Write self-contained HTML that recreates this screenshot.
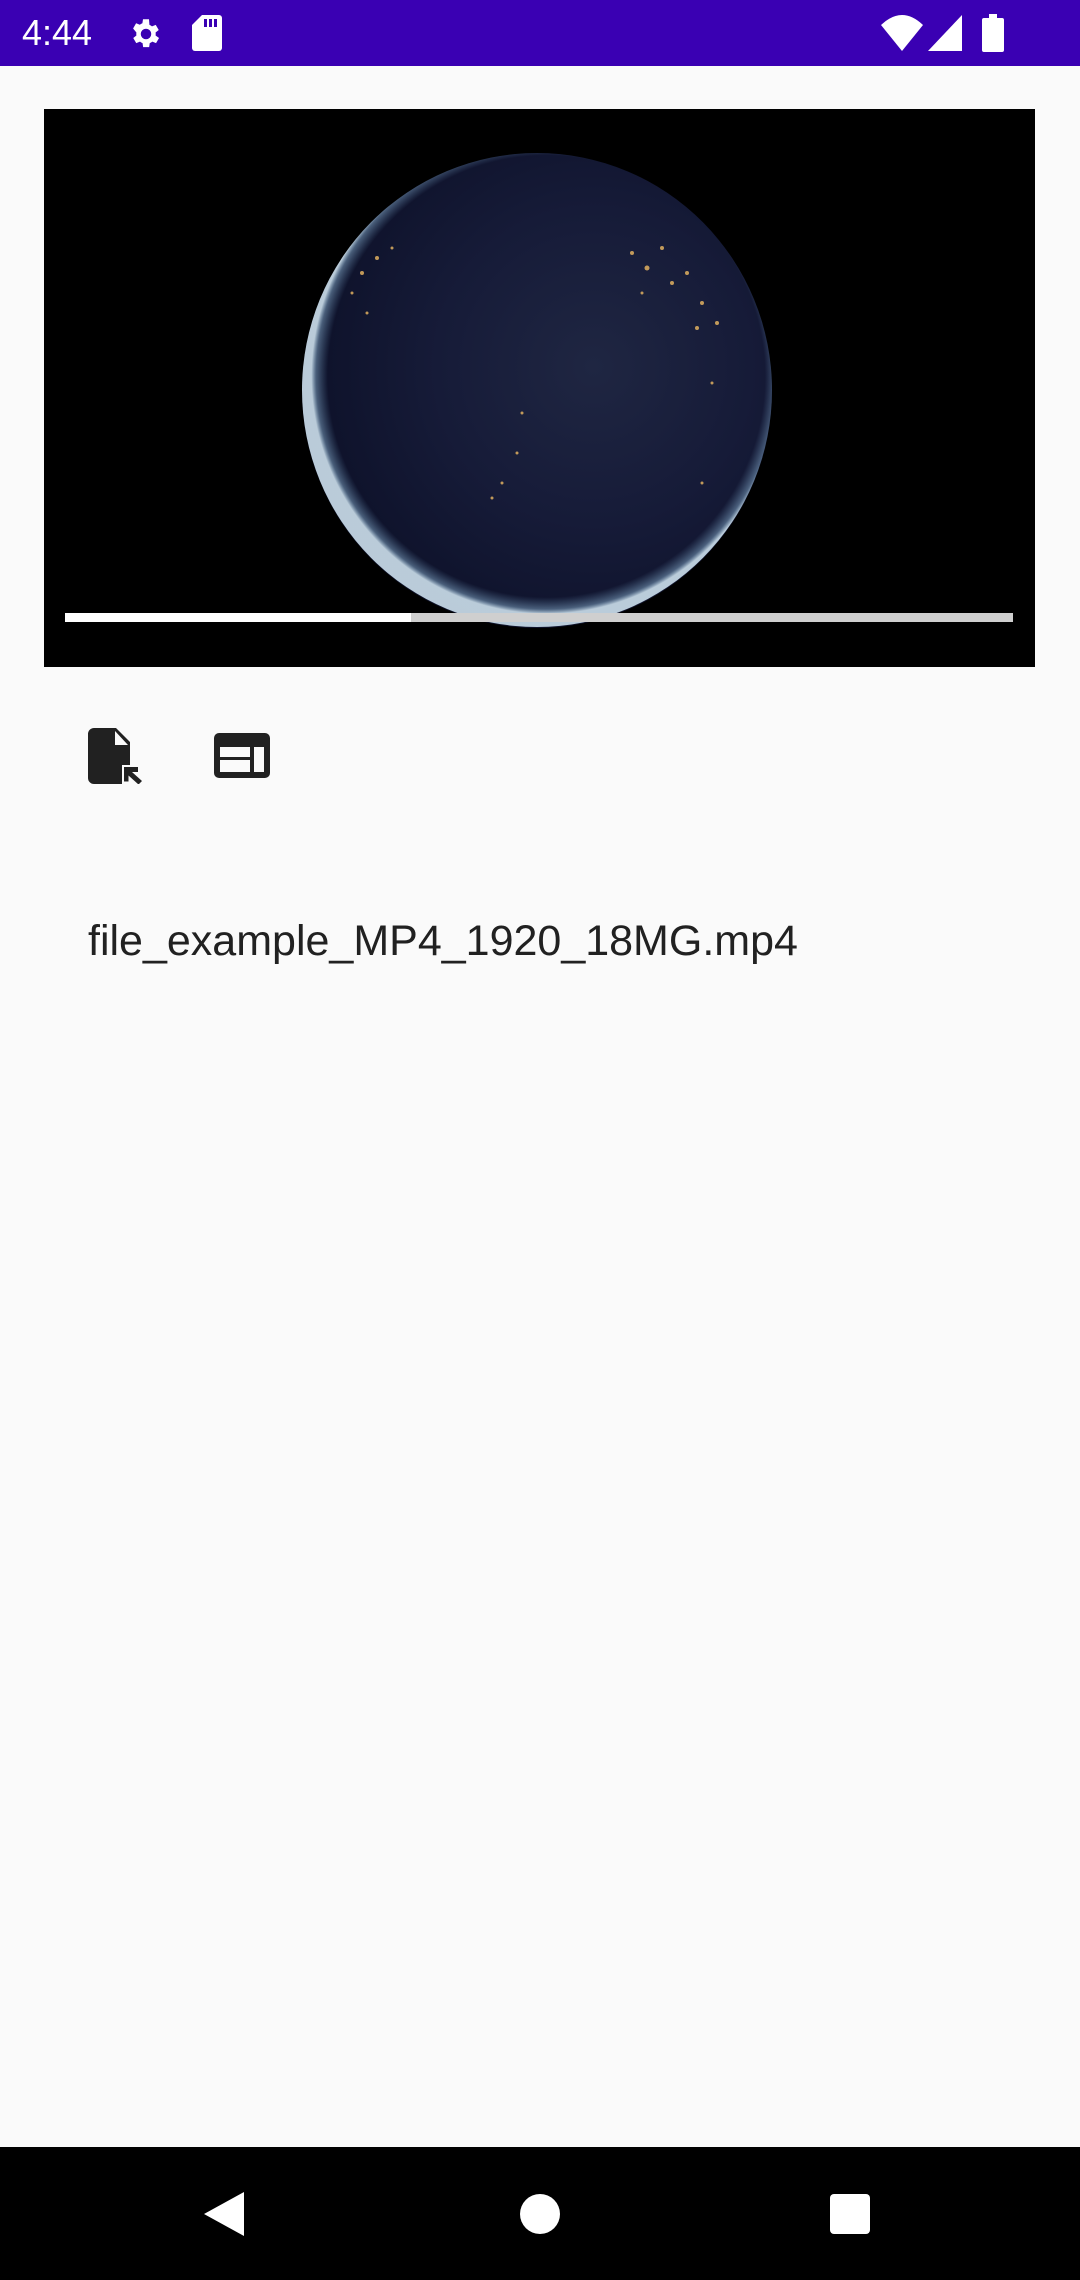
<!DOCTYPE html>
<html><head><meta charset="utf-8">
<style>
html,body{margin:0;padding:0;}
body{width:1080px;height:2280px;background:#fafafa;position:relative;overflow:hidden;font-family:"Liberation Sans",sans-serif;}
.status{position:absolute;left:0;top:0;width:1080px;height:66px;background:#3a00b3;}
.time{position:absolute;left:22px;top:12px;color:#fff;font-size:36px;}
.video{position:absolute;left:44px;top:109px;width:991px;height:558px;background:#000;overflow:hidden;}
.globe{position:absolute;left:258px;top:44px;width:470px;height:475px;border-radius:50%;
background:radial-gradient(circle at 62% 45%,#1f2642 0%,#161b38 40%,#0d1129 75%,#0c1226 100%);}
.prog{position:absolute;left:21px;top:504px;width:948px;height:9px;background:#cfcfcf;}
.prog div{width:346px;height:9px;background:#fff;}
.fname{position:absolute;left:88px;top:917px;font-size:43px;color:#212121;}
.nav{position:absolute;left:0;top:2147px;width:1080px;height:133px;background:#000;}
</style></head><body>
<div class="status">
<div class="time">4:44</div>
<svg style="position:absolute;left:128px;top:16px" width="36" height="36" viewBox="0 0 24 24"><path fill="#fff" d="M19.4 13c.04-.3.06-.65.06-1s-.02-.7-.07-1l2.1-1.65-2-3.46-2.5 1a7.3 7.3 0 0 0-1.7-1L15 2.2h-4l-.4 2.65c-.6.25-1.2.6-1.7 1l-2.5-1-2 3.46L6.6 11c-.04.3-.07.66-.07 1s.03.7.07 1l-2.1 1.65 2 3.46 2.5-1c.52.4 1.08.74 1.7 1l.4 2.65h4l.4-2.65c.6-.25 1.17-.6 1.7-1l2.5 1 2-3.46zM13 15.5a3.5 3.5 0 1 1 0-7 3.5 3.5 0 0 1 0 7z" transform="translate(-1 0)"/></svg>
<svg style="position:absolute;left:192px;top:15px" width="30" height="36" viewBox="0 0 30 36"><path fill="#fff" d="M10 0h17a3 3 0 0 1 3 3v30a3 3 0 0 1-3 3H3a3 3 0 0 1-3-3V10z"/><rect x="12" y="4" width="3" height="8" fill="#3a00b3"/><rect x="17" y="4" width="3" height="8" fill="#3a00b3"/><rect x="22" y="4" width="3" height="8" fill="#3a00b3"/></svg>
<svg style="position:absolute;left:881px;top:15px" width="42" height="36" viewBox="0 0 42 36"><path fill="#fff" d="M0 10 Q21-10 42 10 L21 36z"/></svg>
<svg style="position:absolute;left:928px;top:15px" width="34" height="36" viewBox="0 0 34 36"><path fill="#fff" d="M34 0v36H0z"/></svg>
<svg style="position:absolute;left:982px;top:14px" width="22" height="38" viewBox="0 0 22 38"><path fill="#fff" d="M7 0h8v4h5a2 2 0 0 1 2 2v30a2 2 0 0 1-2 2H2a2 2 0 0 1-2-2V6a2 2 0 0 1 2-2h5z"/></svg>
</div>
<div class="video">
<div class="globe"></div>
<svg style="position:absolute;left:258px;top:44px" width="470" height="475">
<defs><radialGradient id="rim" cx="52%" cy="47%" r="50%"><stop offset="93%" stop-color="#6f9cc0" stop-opacity="0"/><stop offset="98%" stop-color="#8fb8d8" stop-opacity=".45"/><stop offset="100%" stop-color="#d8ecf8" stop-opacity=".85"/></radialGradient>
<clipPath id="c"><ellipse cx="235" cy="237" rx="235" ry="237"/></clipPath></defs>
<rect width="470" height="475" fill="url(#rim)" clip-path="url(#c)"/>
<g fill="#e0b060" opacity=".85">
<circle cx="60" cy="120" r="2"/><circle cx="75" cy="105" r="2"/><circle cx="50" cy="140" r="1.5"/><circle cx="90" cy="95" r="1.5"/><circle cx="65" cy="160" r="1.5"/>
<circle cx="330" cy="100" r="2"/><circle cx="345" cy="115" r="2.5"/><circle cx="360" cy="95" r="2"/><circle cx="370" cy="130" r="2"/><circle cx="385" cy="120" r="2"/><circle cx="400" cy="150" r="2"/><circle cx="340" cy="140" r="1.5"/><circle cx="415" cy="170" r="2"/><circle cx="395" cy="175" r="2"/>
<circle cx="220" cy="260" r="1.5"/><circle cx="215" cy="300" r="1.5"/><circle cx="200" cy="330" r="1.5"/><circle cx="190" cy="345" r="1.5"/>
<circle cx="410" cy="230" r="1.5"/><circle cx="400" cy="330" r="1.5"/>
</g></svg>
<div class="prog"><div></div></div>
</div>
<svg style="position:absolute;left:88px;top:728px" width="54" height="56" viewBox="0 0 54 56"><path fill="#212121" d="M6 0h22l14 14v23H34v19H6a6 6 0 0 1-6-6V6a6 6 0 0 1 6-6z"/><path fill="#fafafa" d="M27 3v14h13z"/><path fill="#212121" d="M36 39h14v5h-6l10 9-3.5 3.5-10-9v6h-4.5z"/></svg>
<svg style="position:absolute;left:214px;top:733px" width="56" height="45" viewBox="0 0 56 45"><path fill="#212121" d="M5 0h46a5 5 0 0 1 5 5v35a5 5 0 0 1-5 5H5a5 5 0 0 1-5-5V5a5 5 0 0 1 5-5z"/><rect x="6" y="14" width="30" height="10" fill="#fafafa"/><rect x="6" y="27" width="30" height="12" fill="#fafafa"/><rect x="40" y="14" width="10" height="25" fill="#fafafa"/></svg>
<div class="fname">file_example_MP4_1920_18MG.mp4</div>
<div class="nav">
<svg style="position:absolute;left:204px;top:45px" width="40" height="44" viewBox="0 0 40 44"><path fill="#fff" d="M40 0v44L0 22z"/></svg>
<div style="position:absolute;left:520px;top:47px;width:40px;height:40px;border-radius:50%;background:#fff"></div>
<div style="position:absolute;left:830px;top:47px;width:40px;height:40px;border-radius:4px;background:#fff"></div>
</div>
</body></html>
